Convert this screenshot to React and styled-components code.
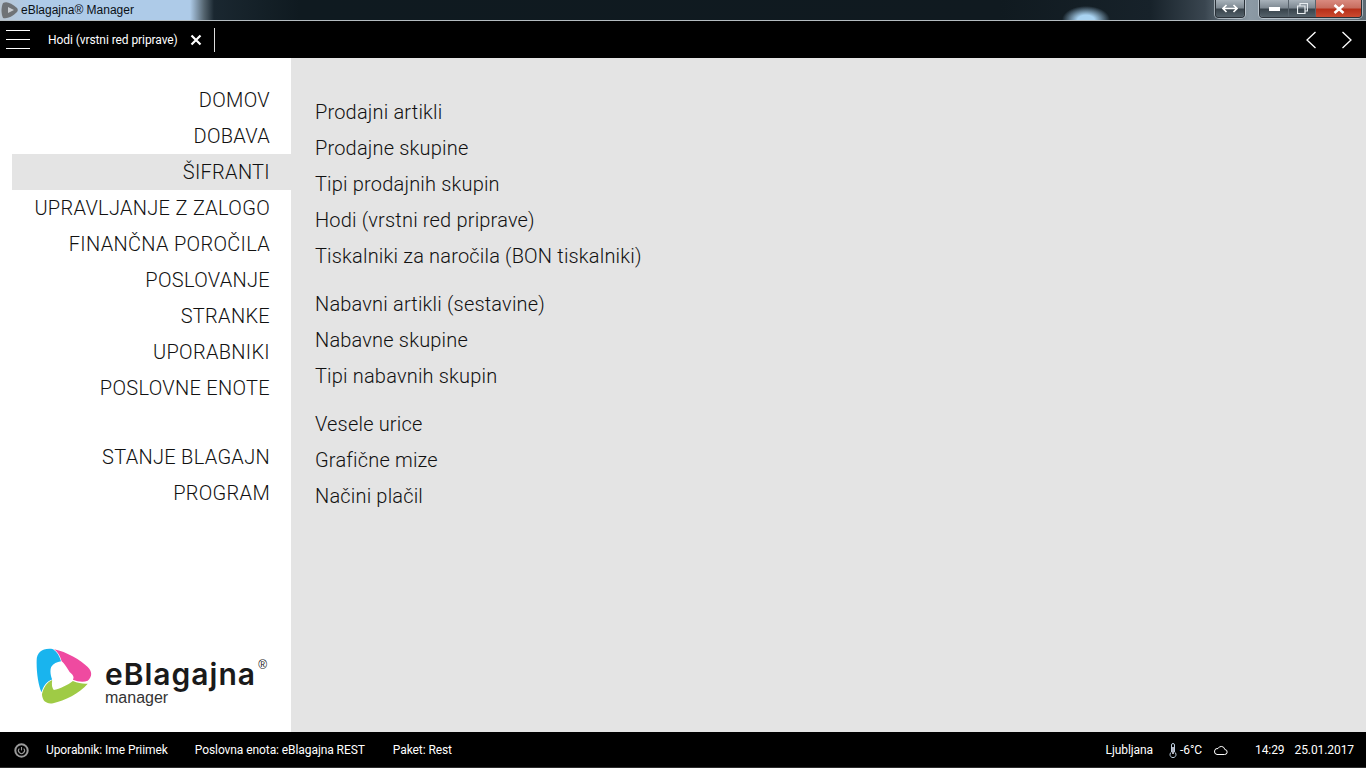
import React from 'react';
import styled, { createGlobalStyle } from 'styled-components';

const Global = createGlobalStyle`
  html, body { margin: 0; padding: 0; height: 100%; overflow: hidden; background: #000; }
  #root { height: 100%; }
  * { box-sizing: border-box; }
`;

const Page = styled.div`
  width: 1366px; height: 768px; display: flex; flex-direction: column;
  font-family: Roboto, "Liberation Sans", sans-serif; overflow: hidden;
`;

const TitleBar = styled.div`
  height: 21px; flex: none; display: flex; align-items: flex-start; position: relative;
  border-bottom: 1px solid #b4bcc0;
  background:
    radial-gradient(ellipse 24px 14px at 1086px 20px, #a9d3f2 0%, #a9d3f2 35%, rgba(169,211,242,0) 100%),
    linear-gradient(90deg, #b9c6d2 0, #aecbe8 30px, #aecbe8 190px, #54646f 204px, #1a2730 214px, #0f1a20 300px, #101a20 1000px, #17222a 1150px, #3a4650 1205px, #8c9aa5 1250px, #5d6a73 1366px);
`;
const AppIcon = styled.svg`width: 20px; height: 20px; flex: none;`;
const TitleText = styled.span`
  font: 12px/21px "Liberation Sans", sans-serif; color: #0a1016; margin-left: 1px;
`;
const Spacer = styled.div`flex: 1;`;
const WinGroup = styled.div`
  height: 18px; display: flex; border: 1px solid #2a3138; border-top: 0;
  border-radius: 0 0 4px 4px; box-shadow: 0 0 0 1px rgba(220,228,235,.6); overflow: hidden;
  margin-right: ${p => p.$mr}px;
`;
const WinBtn = styled.div`
  width: ${p => p.$w}px; display: flex; align-items: center; justify-content: center;
  color: #fff; border-left: ${p => p.$sep ? '1px solid #59646d' : '0'};
  background: ${p => p.$close
    ? 'linear-gradient(180deg, #d98a7f 0, #c86e60 45%, #b7301a 55%, #cc4a30 100%)'
    : 'linear-gradient(180deg, #a8b2ba 0, #7f8a93 45%, #39444c 55%, #55626b 100%)'};
`;

const TopBar = styled.div`
  height: 37px; flex: none; background: #000; display: flex; align-items: center; color: #fff;
`;
const Burger = styled.div`
  width: 24px; height: 19px; margin-left: 6px; flex: none; display: flex; flex-direction: column;
  justify-content: space-between;
  & > i { display: block; height: 1px; background: #fff; }
`;
const TabLabel = styled.span`
  margin-left: 18px; font-size: 12px; color: #fff; letter-spacing: -0.08px;
`;
const CloseIcon = styled.svg`width: 12px; height: 12px; margin-left: 12px; flex: none;`;
const TabDivider = styled.div`width: 1px; height: 24px; background: #ddd; margin-left: 12px;`;
const Nav = styled.svg`width: 12px; height: 20px; flex: none; margin-right: ${p => p.$mr}px;`;

const Main = styled.div`flex: 1; display: flex; min-height: 0;`;
const Sidebar = styled.aside`
  width: 291px; flex: none; background: #fff; display: flex; flex-direction: column;
  padding: 24px 0 0 12px;
`;
const MenuList = styled.nav`display: flex; flex-direction: column;`;
const MenuItem = styled.div`
  height: 36px; line-height: 36px; text-align: right; padding-right: 21px;
  font-size: 20px; font-weight: 300; color: #111; letter-spacing: 0.3px;
  background: ${p => p.$active ? '#e4e4e4' : 'transparent'};
  margin-top: ${p => p.$gap ? '33px' : '0'};
`;
const Logo = styled.div`
  margin-top: auto; margin-bottom: 25px; margin-left: 24px; display: flex; align-items: flex-start; position: relative; height: 62px;
`;
const LogoMark = styled.svg`width: 56px; height: 57px; flex: none; margin-top: 3px;`;
const LogoText = styled.div`
  margin-left: 13px; display: flex; flex-direction: column; color: #111; position: relative; padding-top: 14px;
`;
const LogoName = styled.span`font-family: Inter, "Liberation Sans", sans-serif; font-size: 30px; line-height: 31px; font-weight: 600; letter-spacing: 1px; color: #1a1a1a;`;
const LogoSub = styled.span`font-family: "Liberation Sans", sans-serif; font-size: 16px; line-height: 16px; color: #333;`;
const LogoReg = styled.span`font-family: "Liberation Sans", sans-serif; position: absolute; right: -11px; top: 13px; font-size: 12px; line-height: 14px; color: #222;`;

const Content = styled.section`
  flex: 1; background: #e4e4e4; padding: 36px 0 0 24px; display: flex; flex-direction: column; gap: 12px;
`;
const Group = styled.div`display: flex; flex-direction: column;`;
const Link = styled.div`
  height: 36px; line-height: 36px; font-size: 20px; font-weight: 300; color: #111; letter-spacing: 0.18px;
`;

const Footer = styled.footer`
  height: 36px; flex: none; color: #fff; display: flex; align-items: center;
  background: linear-gradient(180deg, #000 0, #000 35px, #2c2c2c 35px);
  font-size: 12px; letter-spacing: -0.08px; padding-left: 14px;
`;
const PowerIcon = styled.svg`width: 15px; height: 15px; flex: none; margin-right: 17px;`;
const FootText = styled.span`margin-right: ${p => p.$mr || 0}px; white-space: nowrap;`;
const FootIcon = styled.svg`flex: none; margin-right: ${p => p.$mr || 0}px;`;

const groups = [
  ['Prodajni artikli', 'Prodajne skupine', 'Tipi prodajnih skupin', 'Hodi (vrstni red priprave)', 'Tiskalniki za naročila (BON tiskalniki)'],
  ['Nabavni artikli (sestavine)', 'Nabavne skupine', 'Tipi nabavnih skupin'],
  ['Vesele urice', 'Grafične mize', 'Načini plačil'],
];
const menu = ['DOMOV', 'DOBAVA', 'ŠIFRANTI', 'UPRAVLJANJE Z ZALOGO', 'FINANČNA POROČILA', 'POSLOVANJE', 'STRANKE', 'UPORABNIKI', 'POSLOVNE ENOTE', 'STANJE BLAGAJN', 'PROGRAM'];

export default function App() {
  return (
    <Page>
      <Global />
      <TitleBar>
        <AppIcon viewBox="0 0 20 20">
          <path d="M3 3c4-2 8 0 14 5 1 1 1 3 0 4-5 5-10 7-14 6-2-4-2-11 0-15z" fill="#6f7376" />
          <path d="M8 7l6 3-6 3z" fill="#c8ccd0" />
        </AppIcon>
        <TitleText>eBlagajna® Manager</TitleText>
        <Spacer />
        <WinGroup $mr={14}>
          <WinBtn $w={28}>
            <svg width="16" height="9" viewBox="0 0 16 9"><path d="M1 4.5h14M4.5 1L1 4.5 4.5 8M11.5 1L15 4.5 11.5 8" fill="none" stroke="#fff" strokeWidth="1.6" /></svg>
          </WinBtn>
        </WinGroup>
        <WinGroup $mr={4}>
          <WinBtn $w={28}>
            <svg width="11" height="4" viewBox="0 0 11 4"><rect width="11" height="4" fill="#fff" /></svg>
          </WinBtn>
          <WinBtn $w={27} $sep>
            <svg width="11" height="11" viewBox="0 0 11 11"><path d="M3 2.5V.5h7.5V8H8.5M.5 3h7.5v7.5H.5z" fill="none" stroke="#e8edf0" strokeWidth="1.2" /></svg>
          </WinBtn>
          <WinBtn $w={46} $close $sep>
            <svg width="12" height="10" viewBox="0 0 12 10"><path d="M1.5 1l9 8M10.5 1l-9 8" stroke="#fff" strokeWidth="2.6" /></svg>
          </WinBtn>
        </WinGroup>
      </TitleBar>
      <TopBar>
        <Burger><i /><i /><i /></Burger>
        <TabLabel>Hodi (vrstni red priprave)</TabLabel>
        <CloseIcon viewBox="0 0 12 12"><path d="M1.5 1.5l9 9M10.5 1.5l-9 9" stroke="#fff" strokeWidth="2.2" /></CloseIcon>
        <TabDivider />
        <Spacer />
        <Nav $mr={24} viewBox="0 0 12 20"><path d="M10.5 2L2 10l8.5 8" fill="none" stroke="#fff" strokeWidth="1.3" /></Nav>
        <Nav $mr={13} viewBox="0 0 12 20"><path d="M1.5 2L10 10l-8.5 8" fill="none" stroke="#fff" strokeWidth="1.3" /></Nav>
      </TopBar>
      <Main>
        <Sidebar>
          <MenuList>
            {menu.map((m, i) => <MenuItem key={m} $active={i === 2} $gap={i === 9}>{m}</MenuItem>)}
          </MenuList>
          <Logo>
            <LogoMark viewBox="48 38 170 172">
              <path d="M100 41C70 36 50 50 50 75C49 110 55 150 65 172C70 152 82 138 97 133C92 120 90 105 94 95C100 85 112 80 124 78C120 62 112 48 100 41Z" fill="#19b4ee" />
              <path d="M103 41C140 48 185 75 205 95C220 110 218 125 205 137C192 142 175 140 160 134C165 125 160 118 150 110C145 103 135 85 126 78C122 62 114 48 103 41Z" fill="#ef4aa0" />
              <path d="M66 178C72 155 82 142 97 135C95 150 97 160 102 165C120 162 145 150 160 138C175 145 192 147 205 146C180 175 135 198 100 205C80 208 68 200 66 178Z" fill="#9fcb45" />
            </LogoMark>
            <LogoText>
              <LogoReg>®</LogoReg>
              <LogoName>eBlagajna</LogoName>
              <LogoSub>manager</LogoSub>
            </LogoText>
          </Logo>
        </Sidebar>
        <Content>
          {groups.map((g, i) => (
            <Group key={i}>
              {g.map(t => <Link key={t}>{t}</Link>)}
            </Group>
          ))}
        </Content>
      </Main>
      <Footer>
        <PowerIcon viewBox="0 0 15 15">
          <circle cx="7.5" cy="7.5" r="6.2" fill="none" stroke="#9a9a9a" strokeWidth="2" />
          <path d="M5.3 5.5a3 3 0 1 0 4.4 0" fill="none" stroke="#9a9a9a" strokeWidth="1.1" />
          <path d="M7.5 4v3.4" stroke="#9a9a9a" strokeWidth="1.1" />
        </PowerIcon>
        <FootText $mr={27}>Uporabnik: Ime Priimek</FootText>
        <FootText $mr={28}>Poslovna enota: eBlagajna REST</FootText>
        <FootText>Paket: Rest</FootText>
        <Spacer />
        <FootText $mr={15}>Ljubljana</FootText>
        <FootIcon $mr={2} width="10" height="15" viewBox="0 0 10 15">
          <path d="M3.5 2a1.5 1.5 0 0 1 3 0v7a3 3 0 1 1-3 0z" fill="none" stroke="#bcd" strokeWidth="1" />
          <path d="M5 4v7" stroke="#dde" strokeWidth="1.6" />
        </FootIcon>
        <FootText $mr={11}>-6°C</FootText>
        <FootIcon $mr={27} width="15" height="11" viewBox="0 0 15 11">
          <path d="M4 9.5h7.5a2.5 2.5 0 0 0 .3-5A3.6 3.6 0 0 0 5 3.5a3 3 0 0 0-1 6z" fill="none" stroke="#fff" strokeWidth="1" />
        </FootIcon>
        <FootText $mr={10}>14:29</FootText>
        <FootText $mr={12}>25.01.2017</FootText>
      </Footer>
    </Page>
  );
}
